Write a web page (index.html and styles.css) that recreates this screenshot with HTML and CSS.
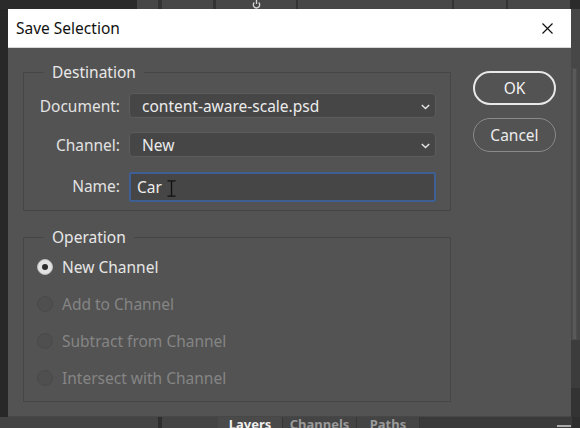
FILE: index.html
```html
<!DOCTYPE html>
<html>
<head>
<meta charset="utf-8">
<title>Save Selection</title>
<link rel="stylesheet" href="styles.css">
</head>
<body>
<div class="app">
  <div class="topbar">
    <div class="tb dark w137"></div>
    <div class="tb cell w21"></div>
    <div class="tb sep w4"></div>
    <div class="tb cell w51"></div>
    <div class="tb sep w3"></div>
    <div class="tb cell w80 power">
      <svg width="9" height="9" viewBox="0 0 9 9"><path d="M2.3 2.5 A3.2 3.2 0 1 0 6.7 2.5" fill="none" stroke="#d8d8d8" stroke-width="1.3"/><path d="M4.5 0 V4" stroke="#d8d8d8" stroke-width="1.3"/></svg>
    </div>
    <div class="tb sep w2"></div>
    <div class="tb cell w154"></div>
    <div class="tb sep w2"></div>
    <div class="tb cell w52"></div>
    <div class="tb sep w2"></div>
    <div class="tb cell w62"></div>
    <div class="tb dark grow"></div>
  </div>

  <div class="leftgap"></div>

  <div class="dialog">
    <div class="titlebar">
      <span class="title">Save Selection</span>
      <svg class="close" width="11" height="11" viewBox="0 0 11 11"><path d="M0.5 0.5 L10.5 10.5 M10.5 0.5 L0.5 10.5" stroke="#111" stroke-width="1.2"/></svg>
    </div>
    <div class="body">
      <div class="groups">
        <fieldset class="group dest">
          <legend>Destination</legend>
          <div class="form">
            <label class="lbl">Document:</label>
            <div class="select">
              <span>content-aware-scale.psd</span>
              <svg class="chev" width="9" height="6" viewBox="0 0 9 6"><path d="M0.8 1 L4.5 4.6 L8.2 1" fill="none" stroke="#e6e6e6" stroke-width="1.4"/></svg>
            </div>
            <label class="lbl">Channel:</label>
            <div class="select">
              <span>New</span>
              <svg class="chev" width="9" height="6" viewBox="0 0 9 6"><path d="M0.8 1 L4.5 4.6 L8.2 1" fill="none" stroke="#e6e6e6" stroke-width="1.4"/></svg>
            </div>
            <label class="lbl">Name:</label>
            <div class="textbox">
              <span>Car</span>
              <svg class="ibeam" width="9" height="17" viewBox="0 0 9 17"><path d="M0.5 0.8 H3.5 M5.5 0.8 H8.5 M4.5 1.5 V15.5 M0.5 16.2 H3.5 M5.5 16.2 H8.5 M3.5 0.8 Q4.5 1 4.5 2 M5.5 0.8 Q4.5 1 4.5 2 M3.5 16.2 Q4.5 16 4.5 15 M5.5 16.2 Q4.5 16 4.5 15" fill="none" stroke="#111" stroke-width="1.3"/></svg>
            </div>
          </div>
        </fieldset>
        <fieldset class="group oper">
          <legend>Operation</legend>
          <div class="radios">
            <div class="radio-row"><span class="radio on"></span><span class="rl">New Channel</span></div>
            <div class="radio-row disabled"><span class="radio off"></span><span class="rl">Add to Channel</span></div>
            <div class="radio-row disabled"><span class="radio off"></span><span class="rl">Subtract from Channel</span></div>
            <div class="radio-row disabled"><span class="radio off"></span><span class="rl">Intersect with Channel</span></div>
          </div>
        </fieldset>
      </div>
      <div class="buttons">
        <button class="btn primary">OK</button>
        <button class="btn">Cancel</button>
      </div>
    </div>
  </div>

  <div class="rightbar">
    <div class="rb-top"></div>
    <div class="rb-track"></div>
    <div class="rb-low"></div>
    <div class="rb-dark"></div>
  </div>

  <div class="bottombar">
    <div class="bb cell w158"></div>
    <div class="bb sep w4"></div>
    <div class="bb cell w56"></div>
    <div class="bb tab active w65">Layers</div>
    <div class="bb tab w74">Channels</div>
    <div class="bb tab w63">Paths</div>
    <div class="bb rest grow"></div>
    <div class="bb menu w16">
      <svg width="16" height="10" viewBox="0 0 16 10"><path d="M1 2 H15 M1 5.5 H15 M1 9 H15" stroke="#cfcfcf" stroke-width="1.4"/></svg>
    </div>
    <div class="bb dark w8"></div>
  </div>
</div>
</body>
</html>
```

FILE: styles.css
```css
* { box-sizing: border-box; }
html, body {
  margin: 0;
  padding: 0;
}
body {
  width: 580px;
  height: 428px;
  overflow: hidden;
  background: #2a2a2a;
  font-family: "Noto Sans", "Open Sans", sans-serif;
  font-size: 15.5px;
}
.app {
  display: grid;
  grid-template-columns: 8px 563px 9px;
  grid-template-rows: 9px 408px 11px;
  width: 580px;
  height: 428px;
}

/* top strip */
.topbar {
  grid-column: 1 / -1;
  display: flex;
  height: 9px;
}
.tb { height: 9px; flex: none; }
.tb.dark { background: #2b2b2b; }
.tb.cell { background: #474747; }
.tb.sep { background: #333333; }
.tb.grow { flex: 1; }
.tb.power { display: flex; justify-content: center; padding-left: 0; }
.w2 { width: 2px; } .w3 { width: 3px; } .w4 { width: 4px; } .w8 { width: 8px; }
.w16 { width: 16px; } .w21 { width: 21px; } .w51 { width: 51px; } .w52 { width: 52px; }
.w56 { width: 56px; } .w62 { width: 62px; } .w63 { width: 63px; } .w65 { width: 65px; }
.w74 { width: 74px; } .w80 { width: 80px; } .w137 { width: 137px; } .w154 { width: 154px; }
.w158 { width: 158px; }

.leftgap { background: #282828; }

/* dialog */
.dialog {
  background: #535353;
  display: flex;
  flex-direction: column;
  border-bottom: 1px solid #474747;
}
.titlebar {
  height: 39px;
  flex: none;
  background: #ffffff;
  display: flex;
  align-items: center;
  justify-content: space-between;
  padding: 0 18px 0 8px;
  border-bottom: 1px solid #d8d8d8;
}
.title {
  color: #111;
  font-size: 15.5px;
}
.body {
  display: flex;
  gap: 22px;
  padding: 14px 15px 0 15px;
}
.groups {
  width: 428px;
  flex: none;
  display: flex;
  flex-direction: column;
  gap: 16px;
}
.group {
  margin: 0;
  border: 1px solid #464646;
  padding: 0;
  min-width: 0;
}
.group legend {
  margin-left: 20px;
  padding: 0 8px;
  line-height: 20px;
  color: #e8e8e8;
}
.form {
  display: grid;
  grid-template-columns: 96px 307px;
  grid-template-rows: 25px 25px 30px;
  column-gap: 9px;
  row-gap: 14px;
  padding: 11px 14px 9px 0;
}
.form .textbox { margin-top: 1px; }
.lbl {
  text-align: right;
  color: #e2e2e2;
  align-self: center;
}
.select {
  display: flex;
  align-items: center;
  justify-content: space-between;
  background: #464646;
  border: 1px solid #5c5c5c;
  border-radius: 4px;
  padding: 0 5px 0 12px;
  color: #ececec;
}
.chev { margin-top: 2px; }
.textbox {
  display: flex;
  align-items: center;
  background: #464646;
  border: 2px solid #3d5f93;
  border-radius: 2px;
  padding: 0 6px;
  color: #ececec;
  height: 30px;
}
.ibeam { margin-left: 5px; margin-top: 3px; }

.radios {
  padding: 1px 0 5px 13px;
}
.radio-row {
  height: 37px;
  display: flex;
  align-items: center;
  gap: 9px;
  color: #e6e6e6;
}
.radio-row.disabled { color: #858585; }
.radio {
  width: 16px;
  height: 16px;
  border-radius: 50%;
  flex: none;
  display: flex;
  align-items: center;
  justify-content: center;
}
.radio.on {
  background: #e2e2e2;
  border: 1px solid #bcbcbc;
}
.radio.on::after {
  content: "";
  width: 6px;
  height: 6px;
  border-radius: 50%;
  background: #2c2c2c;
}
.radio.off {
  background: #4f4f4f;
  border: 1px solid #4a4a4a;
}

.buttons {
  display: flex;
  flex-direction: column;
  gap: 13px;
  padding-top: 9px;
}
.btn {
  width: 83px;
  height: 34px;
  border-radius: 17px;
  background: transparent;
  border: 1.5px solid #8a8a8a;
  color: #ececec;
  font-family: "Noto Sans", "Open Sans", sans-serif;
  font-size: 15.5px;
  padding: 0;
}
.btn.primary {
  border: 2px solid #e8e8e8;
  color: #f2f2f2;
}

/* right strip */
.rightbar {
  display: flex;
  flex-direction: column;
  background: #474747;
}
.rb-top { height: 59px; background: #474747; }
.rb-track {
  height: 272px;
  margin: 0 3px 0 1px;
  background: #595959;
  border: 1px solid #4d4d4d;
}
.rb-low { height: 48px; background: #3c3c3c; }
.rb-dark { flex: 1; background: #333333; }

/* bottom strip */
.bottombar {
  grid-column: 1 / -1;
  display: flex;
  height: 11px;
  overflow: hidden;
  background: #3c3c3c;
}
.bb { height: 11px; flex: none; }
.bb.cell { background: #444444; }
.bb.sep { background: #2e2e2e; }
.bb.dark { background: #2e2e2e; }
.bb.grow { flex: 1; }
.bb.rest { background: #3a3a3a; }
.bb.tab {
  background: #444444;
  border-right: 1px solid #363636;
  color: #9a9a9a;
  font-weight: bold;
  font-size: 13px;
  line-height: 13px;
  padding-top: 1px;
  text-align: center;
}
.bb.tab.active {
  background: #4a4a4a;
  color: #f0f0f0;
}
.bb.menu { background: #3a3a3a; }
```
